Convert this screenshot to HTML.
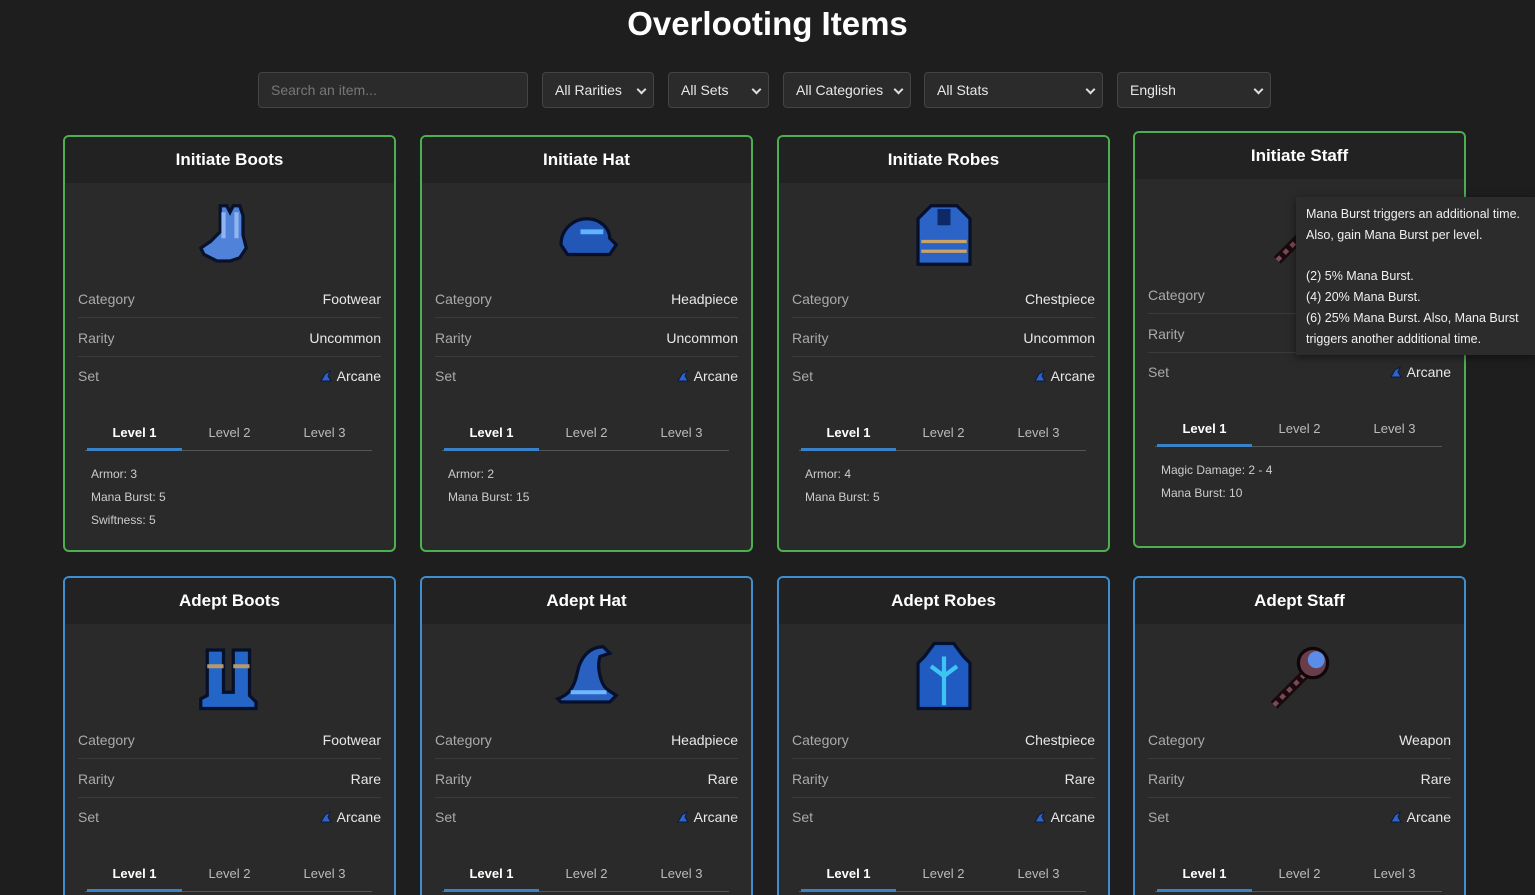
<!DOCTYPE html>
<html><head><meta charset="utf-8"><style>
*{box-sizing:border-box;margin:0;padding:0}
html{width:1535px;height:895px;overflow:hidden;background:#1e1e1f}
body{width:1535px;height:895px;overflow:hidden;background:#1e1e1f;font-family:"Liberation Sans",Arial,sans-serif;color:#e8e8e8;position:relative}
h1{position:absolute;top:5px;left:0;width:1535px;text-align:center;font-size:33px;font-weight:bold;color:#fff}
.f{position:absolute;top:72px;height:36px;background:#2b2b2c;border:1px solid #444;border-radius:4px;font-size:14px;color:#e8e8e8;padding:0 12px;line-height:34px}
.f.s::after{content:"";position:absolute;right:8px;top:13px;width:5px;height:5px;border-right:2px solid #ddd;border-bottom:2px solid #ddd;transform:rotate(45deg)}
.c{position:absolute;width:333px;height:417px;background:#2a2a2b;border:2px solid #4caf50;border-radius:6px;overflow:hidden}
.c.b{border-color:#3f8fd0}
.hd{position:absolute;left:0;top:0;width:100%;height:46px;background:#222223;text-align:center;line-height:46px;font-size:17px;font-weight:bold;color:#fff}
.im{position:absolute;left:126px;top:59px;width:78px;height:78px}
.r{position:absolute;left:13px;right:13px;height:38px;font-size:14px;color:#aaa;line-height:38px}
.r span{position:absolute;right:0;color:#e8e8e8}
.r.l{border-bottom:1px solid #3b3b3c}
.tb{position:absolute;left:20px;width:287px;top:280px;height:34px;border-bottom:1px solid #555;font-size:13px;color:#bbb}
.tb div{position:absolute;top:8px;width:95px;text-align:center}
.tb .a{color:#fff;font-weight:bold;border-bottom:3px solid #3a82c8;height:26px}
.st{position:absolute;left:26px;font-size:12px;color:#ccc}
.tip{position:absolute;left:1296px;top:197px;width:239px;height:158px;background:#2c2c2d;padding:7px 10px;font-size:12.5px;line-height:20.8px;color:#f0f0f0;box-shadow:0 2px 8px rgba(0,0,0,.5)}
</style></head><body>
<h1>Overlooting Items</h1>
<div class="f" style="left:258px;width:270px;color:#777">Search an item...</div>
<div class="f s" style="left:542px;width:112px">All Rarities</div>
<div class="f s" style="left:668px;width:101px">All Sets</div>
<div class="f s" style="left:783px;width:128px">All Categories</div>
<div class="f s" style="left:924px;width:179px">All Stats</div>
<div class="f s" style="left:1117px;width:154px">English</div>

<svg width="0" height="0" style="position:absolute"><defs>
<symbol id="arc" viewBox="0 0 14 14"><path d="M2 12 L6 5 L11 2 L9 7 L12 12Z" fill="#2f63c4" stroke="#0a1a40" stroke-width="1"/></symbol>
</defs></svg>

<div class="c" style="left:63px;top:135px"><div class="hd">Initiate Boots</div>
<svg class="im" viewBox="0 0 24 24"><path d="M9 3h2l1 2 1-2h2l1 3v6l1 4-2 3-3 1H8l-4-2-1-2 3-2 3-3z" fill="#4f82d8" stroke="#08122a" stroke-width="1"/><path d="M10 5v8M14 5v8" stroke="#8fb5f0" stroke-width="1.3"/></svg>
<div class="r l" style="top:143px">Category<span>Footwear</span></div>
<div class="r l" style="top:182px">Rarity<span>Uncommon</span></div>
<div class="r" style="top:220px">Set<span><svg width="14" height="14" style="vertical-align:-2px;margin-right:4px"><use href="#arc"/></svg>Arcane</span></div>
<div class="tb"><div class="a" style="left:2px">Level 1</div><div style="left:97px">Level 2</div><div style="left:192px">Level 3</div></div>
<div class="st" style="top:330px">Armor: 3</div><div class="st" style="top:353px">Mana Burst: 5</div><div class="st" style="top:376px">Swiftness: 5</div></div>

<div class="c" style="left:420px;top:135px"><div class="hd">Initiate Hat</div>
<svg class="im" viewBox="0 0 24 24"><path d="M4 15c0-5 4-8 8-8s7 3 7 6l2 2-2 3H6z" fill="#2257b8" stroke="#06102a" stroke-width="1"/><path d="M10 11h7" stroke="#5fb3ff" stroke-width="1.5"/></svg>
<div class="r l" style="top:143px">Category<span>Headpiece</span></div>
<div class="r l" style="top:182px">Rarity<span>Uncommon</span></div>
<div class="r" style="top:220px">Set<span><svg width="14" height="14" style="vertical-align:-2px;margin-right:4px"><use href="#arc"/></svg>Arcane</span></div>
<div class="tb"><div class="a" style="left:2px">Level 1</div><div style="left:97px">Level 2</div><div style="left:192px">Level 3</div></div>
<div class="st" style="top:330px">Armor: 2</div><div class="st" style="top:353px">Mana Burst: 15</div></div>

<div class="c" style="left:777px;top:135px"><div class="hd">Initiate Robes</div>
<svg class="im" viewBox="0 0 24 24"><path d="M8 3h8l4 4v14H4V7z" fill="#2b63c6" stroke="#06102a" stroke-width="1"/><path d="M5 14h14M5 17h14" stroke="#c9a36a" stroke-width="1"/><path d="M10 4h4v5h-4z" fill="#0d2a66"/></svg>
<div class="r l" style="top:143px">Category<span>Chestpiece</span></div>
<div class="r l" style="top:182px">Rarity<span>Uncommon</span></div>
<div class="r" style="top:220px">Set<span><svg width="14" height="14" style="vertical-align:-2px;margin-right:4px"><use href="#arc"/></svg>Arcane</span></div>
<div class="tb"><div class="a" style="left:2px">Level 1</div><div style="left:97px">Level 2</div><div style="left:192px">Level 3</div></div>
<div class="st" style="top:330px">Armor: 4</div><div class="st" style="top:353px">Mana Burst: 5</div></div>

<div class="c" style="left:1133px;top:131px"><div class="hd">Initiate Staff</div>
<svg class="im" viewBox="0 0 24 24"><path d="M5 21L20 6" stroke="#1a0a0e" stroke-width="3"/><path d="M5 21L20 6" stroke="#7a4a56" stroke-width="1.4" stroke-dasharray="1.5 1.5"/></svg>
<div class="r l" style="top:143px">Category<span>Weapon</span></div>
<div class="r l" style="top:182px">Rarity<span>Uncommon</span></div>
<div class="r" style="top:220px">Set<span><svg width="14" height="14" style="vertical-align:-2px;margin-right:4px"><use href="#arc"/></svg>Arcane</span></div>
<div class="tb"><div class="a" style="left:2px">Level 1</div><div style="left:97px">Level 2</div><div style="left:192px">Level 3</div></div>
<div class="st" style="top:330px">Magic Damage: 2 - 4</div><div class="st" style="top:353px">Mana Burst: 10</div></div>

<div class="c b" style="left:63px;top:576px"><div class="hd">Adept Boots</div>
<svg class="im" viewBox="0 0 24 24"><path d="M5 4h5v13h3V4h5v14l2 2v2H3v-3l2-1z" fill="#2466c8" stroke="#06102a" stroke-width="1"/><path d="M5 9h5M13 9h5" stroke="#b89a6a" stroke-width="1.2"/></svg>
<div class="r l" style="top:143px">Category<span>Footwear</span></div>
<div class="r l" style="top:182px">Rarity<span>Rare</span></div>
<div class="r" style="top:220px">Set<span><svg width="14" height="14" style="vertical-align:-2px;margin-right:4px"><use href="#arc"/></svg>Arcane</span></div>
<div class="tb"><div class="a" style="left:2px">Level 1</div><div style="left:97px">Level 2</div><div style="left:192px">Level 3</div></div></div>

<div class="c b" style="left:420px;top:576px"><div class="hd">Adept Hat</div>
<svg class="im" viewBox="0 0 24 24"><path d="M3 19c3-1 5-3 6-8s4-8 8-8l2 2-3 1c-1 3 0 8 2 10l3 2-2 2H4z" fill="#2a60c0" stroke="#06102a" stroke-width="1"/><path d="M7 17h11" stroke="#6fb8ff" stroke-width="1.2"/></svg>
<div class="r l" style="top:143px">Category<span>Headpiece</span></div>
<div class="r l" style="top:182px">Rarity<span>Rare</span></div>
<div class="r" style="top:220px">Set<span><svg width="14" height="14" style="vertical-align:-2px;margin-right:4px"><use href="#arc"/></svg>Arcane</span></div>
<div class="tb"><div class="a" style="left:2px">Level 1</div><div style="left:97px">Level 2</div><div style="left:192px">Level 3</div></div></div>

<div class="c b" style="left:777px;top:576px"><div class="hd">Adept Robes</div>
<svg class="im" viewBox="0 0 24 24"><path d="M9 2h6l3 4 2 2v14H4V8l2-2z" fill="#1f5bc0" stroke="#06102a" stroke-width="1"/><path d="M12 6v15M8 9l4 3 4-3" stroke="#3ec4f0" stroke-width="1.3" fill="none"/></svg>
<div class="r l" style="top:143px">Category<span>Chestpiece</span></div>
<div class="r l" style="top:182px">Rarity<span>Rare</span></div>
<div class="r" style="top:220px">Set<span><svg width="14" height="14" style="vertical-align:-2px;margin-right:4px"><use href="#arc"/></svg>Arcane</span></div>
<div class="tb"><div class="a" style="left:2px">Level 1</div><div style="left:97px">Level 2</div><div style="left:192px">Level 3</div></div></div>

<div class="c b" style="left:1133px;top:576px"><div class="hd">Adept Staff</div>
<svg class="im" viewBox="0 0 24 24"><path d="M4 21L14 11" stroke="#1a0a0e" stroke-width="3"/><path d="M4 21L14 11" stroke="#7a4a56" stroke-width="1.4" stroke-dasharray="1.5 1.5"/><circle cx="16" cy="8" r="4.5" fill="#6a3e48" stroke="#10060a"/><circle cx="17" cy="7" r="2.6" fill="#5a8ce8"/></svg>
<div class="r l" style="top:143px">Category<span>Weapon</span></div>
<div class="r l" style="top:182px">Rarity<span>Rare</span></div>
<div class="r" style="top:220px">Set<span><svg width="14" height="14" style="vertical-align:-2px;margin-right:4px"><use href="#arc"/></svg>Arcane</span></div>
<div class="tb"><div class="a" style="left:2px">Level 1</div><div style="left:97px">Level 2</div><div style="left:192px">Level 3</div></div></div>

<div class="tip">Mana Burst triggers an additional time.<br>Also, gain Mana Burst per level.<br><br>(2) 5% Mana Burst.<br>(4) 20% Mana Burst.<br>(6) 25% Mana Burst. Also, Mana Burst<br>triggers another additional time.</div>
</body></html>
